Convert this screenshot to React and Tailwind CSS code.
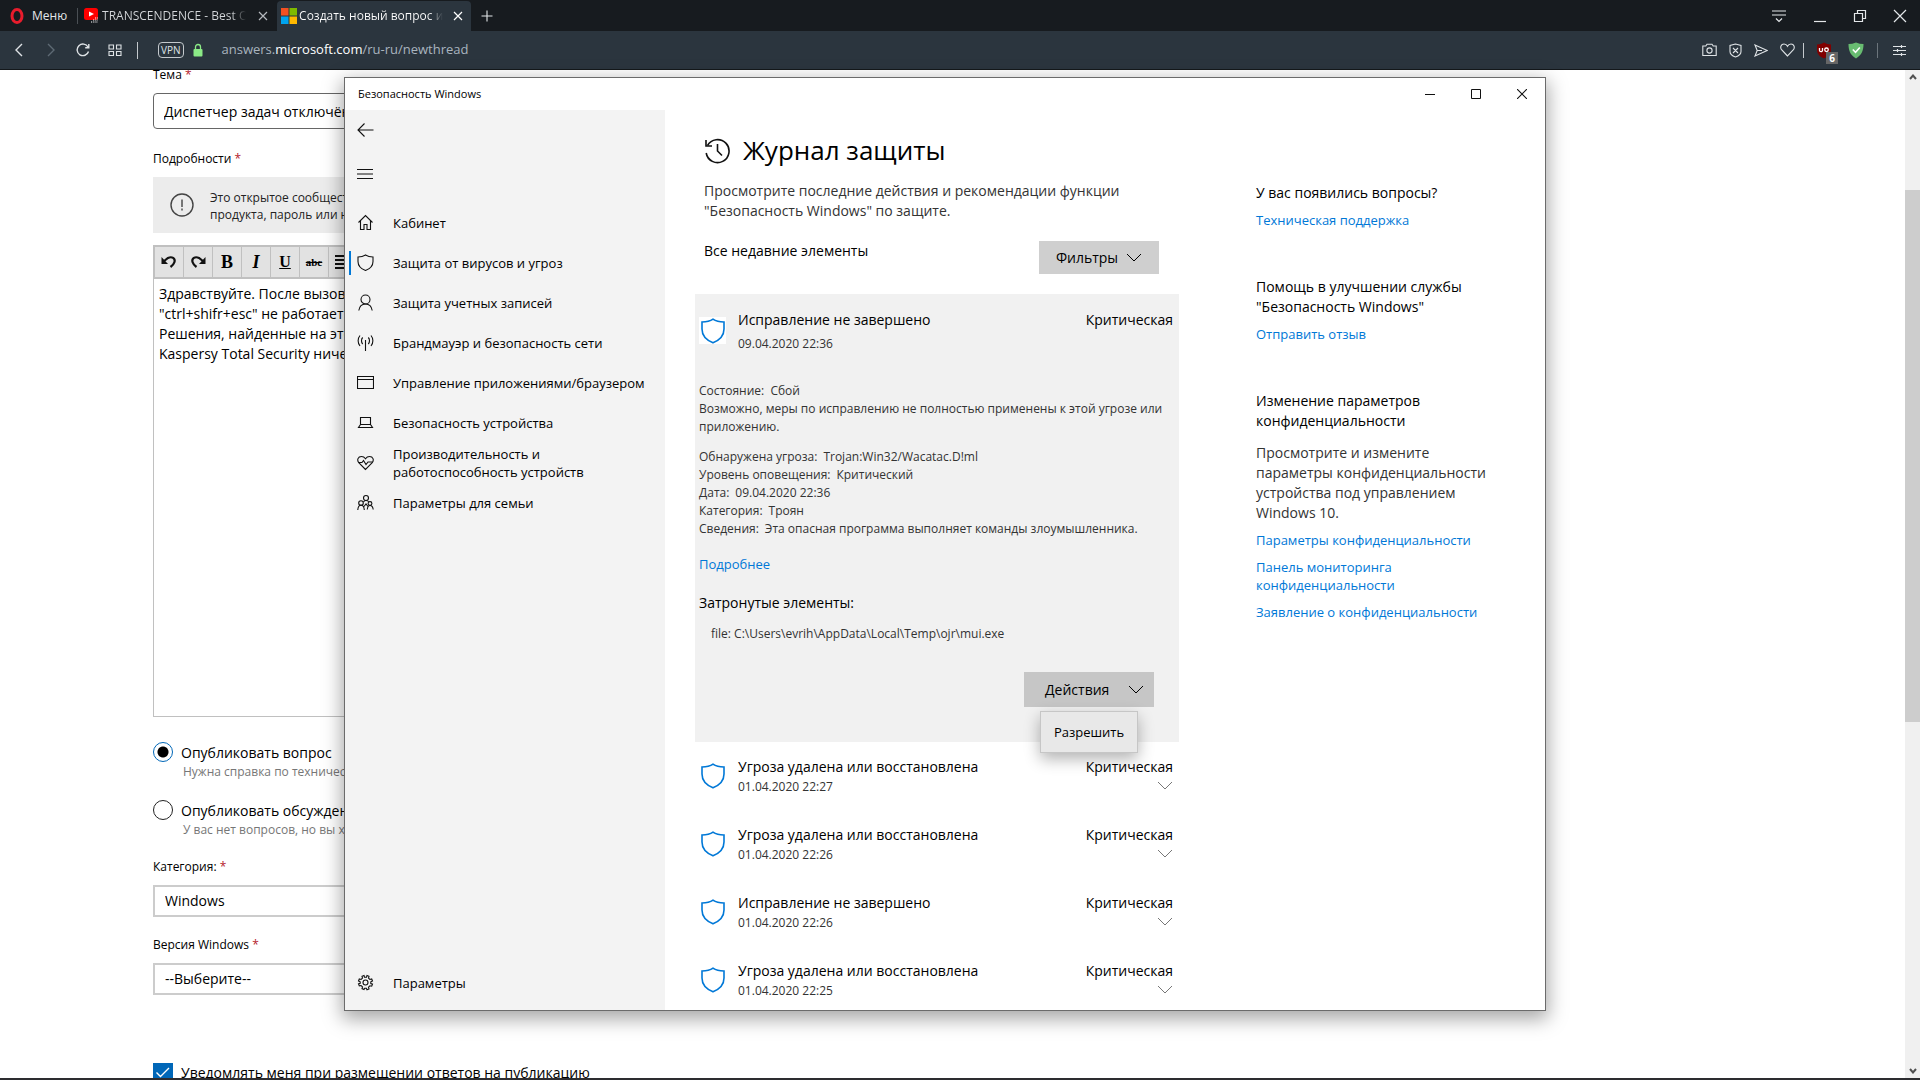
import clsx from 'clsx';

const navItems = [
  { icon: 'home', label: 'Кабинет' },
  { icon: 'shield', label: 'Защита от вирусов и угроз', active: true },
  { icon: 'person', label: 'Защита учетных записей' },
  { icon: 'antenna', label: 'Брандмауэр и безопасность сети' },
  { icon: 'window', label: 'Управление приложениями/браузером' },
  { icon: 'laptop', label: 'Безопасность устройства' },
  { icon: 'heart', label: 'Производительность и работоспособность устройств' },
  { icon: 'family', label: 'Параметры для семьи' },
];

const details = [
  ['Обнаружена угроза:', 'Trojan:Win32/Wacatac.D!ml'],
  ['Уровень оповещения:', 'Критический'],
  ['Дата:', '09.04.2020 22:36'],
  ['Категория:', 'Троян'],
  ['Сведения:', 'Эта опасная программа выполняет команды злоумышленника.'],
];

const history = [
  { title: 'Угроза удалена или восстановлена', date: '01.04.2020 22:27' },
  { title: 'Угроза удалена или восстановлена', date: '01.04.2020 22:26' },
  { title: 'Исправление не завершено', date: '01.04.2020 22:26' },
  { title: 'Угроза удалена или восстановлена', date: '01.04.2020 22:25' },
];

const iconPaths = {
  home: (
    <>
      <path d="M1.5 8.5 8.5 1.5l7 7" />
      <path d="M3.5 7v8.5H7v-5h3v5h3.5V7" />
    </>
  ),
  shield: <path d="M8.500 1C6.500 2.300 4 3 1 3v4.500c0 4 3 7.300 7.500 9 4.500-1.700 7.500-5 7.500-9V3c-3 0-5.500-.7-7.500-2z" />,
  person: (
    <>
      <circle cx="8.500" cy="5.500" r="4.500" />
      <path d="M1.800 16.500c.6-4 3.200-6.500 6.700-6.500s6.100 2.500 6.700 6.500" />
    </>
  ),
  antenna: (
    <>
      <path d="M8.500 6v11" />
      <path d="M5.700 3.500c-1.600 1.700-1.600 4.800 0 6.500M11.300 3.500c1.600 1.700 1.600 4.800 0 6.500" />
      <path d="M3 1.500c-2.500 3-2.500 7.500 0 10.500M14 1.500c2.500 3 2.500 7.500 0 10.500" />
    </>
  ),
  window: <path d="M.5 2.500h16v12H.5zM.5 5.500h16" />,
  laptop: <path d="M3.500 3.500h10v7h-10zM3.500 10.500 1.500 13.500h14l-2-3" />,
  heart: (
    <>
      <path d="M8.500 15.500 2 9C-.5 6 1 2.500 4.500 2.500c1.800 0 3 .8 4 2.200 1-1.400 2.200-2.200 4-2.200C16 2.500 17.500 6 15 9z" />
      <path d="M1.500 8.500H5l1.500-2 2.500 4 2-2.500h4.500" />
    </>
  ),
  family: (
    <>
      <circle cx="9" cy="4" r="2.500" />
      <circle cx="4" cy="9" r="2.300" />
      <circle cx="13" cy="9.500" r="1.900" />
      <path d="M.8 16c.2-3 1.200-4.700 3.200-4.700s3.100 1.700 3.300 4.700M10.300 15.500c.2-2.500 1-4 2.700-4s2.900 1.500 3.200 4M6.500 8C7 7 8 6.500 9 6.500s2.200.4 2.700 1.300M7 12.500l2-2.500 2 2.500" />
    </>
  ),
  gear: (
    <>
      <circle cx="8.500" cy="8.500" r="2.500" />
      <path d="m7 1.500.5 1.700h2L10 1.500l2 .8-.5 1.800 1.400 1.400 1.800-.5.8 2-1.700.8v1.800l1.700.6-.8 2-1.800-.4-1.400 1.400.5 1.700-2 .9-.7-1.500H7.700L7 15.500l-2-.9.5-1.700-1.400-1.400-1.800.4-.8-2 1.700-.6V7.800L1.500 7l.8-2 1.800.5 1.400-1.400L5 2.300z" />
    </>
  ),
};

function NavIcon({ name }) {
  return (
    <svg viewBox="0 0 17 18" className="h-[18px] w-[17px] shrink-0" fill="none" stroke="#111" strokeWidth="1.100">
      {iconPaths[name]}
    </svg>
  );
}

function Chevron({ className }) {
  return (
    <svg viewBox="0 0 16 9" className={clsx('h-[9px] w-4', className)} fill="none" stroke="currentColor" strokeWidth="1">
      <path d="m1 1 7 7 7-7" />
    </svg>
  );
}

function ThreatShield({ boxed }) {
  return (
    <span className={clsx('flex h-[27px] w-[27px] shrink-0 items-center justify-center', boxed && 'bg-white')}>
      <svg viewBox="0 0 24 26" className="h-[26px] w-6" fill="none" stroke="#0078d7" strokeWidth="1.600">
        <path d="M12 1.200C9 3.300 5.500 4 1 4v7c0 6.500 4.200 11 11 13.800C18.800 22 23 17.500 23 11V4c-4.500 0-8-.7-11-2.800z" />
      </svg>
    </span>
  );
}

function TabClose({ bright }) {
  return (
    <button aria-label="Закрыть вкладку" className="ml-2">
      <svg viewBox="0 0 10 10" className="h-2.5 w-2.5" stroke={bright ? '#fff' : '#b5b9bd'} strokeWidth="1.200">
        <path d="m1 1 8 8M9 1 1 9" />
      </svg>
    </button>
  );
}

function Tabs() {
  return (
    <header className="flex h-[31px] shrink-0 items-center bg-[#171b1f] text-[13px] text-[#e4e7ea]">
      <button className="flex h-full items-center gap-2 pl-2.5 pr-2.5">
        <svg viewBox="0 0 14 16" className="h-4 w-3.5">
          <ellipse cx="7" cy="8" rx="5" ry="6.500" fill="none" stroke="#e81c2c" strokeWidth="3" />
        </svg>
        <span className="text-[12px]">Меню</span>
      </button>
      <span className="h-4 w-px bg-[#4a4f54]" />
      <div className="flex h-full w-[199px] items-center gap-1 pl-1.5">
        <svg viewBox="0 0 14 15" className="h-[15px] w-3.5 shrink-0">
          <rect y="0" width="14" height="12" rx="2.500" fill="#f00" />
          <path d="m5 3.500 5 2.500-5 2.500z" fill="#fff" />
          <path d="M7 14h7M9 12h5M11 10h3" stroke="#fff" strokeWidth="1.200" strokeDasharray="1.200 1" />
        </svg>
        <span className="w-[144px] overflow-hidden whitespace-nowrap bg-gradient-to-r from-[#d5d8db] from-90% to-transparent bg-clip-text text-[12px] text-transparent">
          TRANSCENDENCE - Best Of
        </span>
        <TabClose />
      </div>
      <div className="mt-px flex h-[30px] w-[194px] items-center gap-0.5 rounded-t bg-[#2b353e] pl-1">
        <svg viewBox="0 0 16 16" className="h-4 w-4 shrink-0">
          <path fill="#f25022" d="M0 0h7.500v7.500H0z" />
          <path fill="#7fba00" d="M8.500 0H16v7.500H8.500z" />
          <path fill="#00a4ef" d="M0 8.500h7.500V16H0z" />
          <path fill="#ffb900" d="M8.500 8.500H16V16H8.500z" />
        </svg>
        <span className="w-[144px] overflow-hidden whitespace-nowrap bg-gradient-to-r from-white from-90% to-transparent bg-clip-text text-[12px] text-transparent">
          Создать новый вопрос или
        </span>
        <TabClose bright />
      </div>
      <button aria-label="Новая вкладка" className="ml-2.5">
        <svg viewBox="0 0 12 12" className="h-3 w-3" stroke="#e4e7ea" strokeWidth="1.100">
          <path d="M6 .5v11M.5 6h11" />
        </svg>
      </button>
      <div className="ml-auto flex items-center gap-[26px] pr-[13px]">
        <button aria-label="Меню вкладок">
          <svg viewBox="0 0 16 16" className="h-4 w-4" fill="none" stroke="#e4e7ea" strokeWidth="1.200">
            <path d="M1 3h14M1 7h14M5 10.500l3 3 3-3" />
          </svg>
        </button>
        <button aria-label="Свернуть">
          <svg viewBox="0 0 14 14" className="h-3.5 w-3.5" stroke="#e4e7ea" strokeWidth="1.200">
            <path d="M1 12.500h12" />
          </svg>
        </button>
        <button aria-label="Восстановить">
          <svg viewBox="0 0 14 14" className="h-3.5 w-3.5" fill="none" stroke="#e4e7ea" strokeWidth="1.200">
            <path d="M1.500 4.500h8v8h-8zM4.500 4.500v-3h8v8h-3" />
          </svg>
        </button>
        <button aria-label="Закрыть">
          <svg viewBox="0 0 14 14" className="h-3.5 w-3.5" stroke="#e4e7ea" strokeWidth="1.200">
            <path d="m1 1 12 12M13 1 1 13" />
          </svg>
        </button>
      </div>
    </header>
  );
}

function AddressBar() {
  return (
    <nav className="flex h-[39px] shrink-0 items-center border-b border-[#14181b] bg-[#2b353e] pl-[15px] pr-3.5 text-[#dfe3e6]">
      <button aria-label="Назад">
        <svg viewBox="0 0 8 14" className="h-3.5 w-2" fill="none" stroke="currentColor" strokeWidth="1.400">
          <path d="M7 1 1 7l6 6" />
        </svg>
      </button>
      <button aria-label="Вперед" className="ml-6">
        <svg viewBox="0 0 8 14" className="h-3.5 w-2" fill="none" stroke="#5e6a74" strokeWidth="1.400">
          <path d="m1 1 6 6-6 6" />
        </svg>
      </button>
      <button aria-label="Обновить" className="ml-[21px]">
        <svg viewBox="0 0 14 14" className="h-3.5 w-3.5" fill="none" stroke="currentColor" strokeWidth="1.400">
          <path d="M12.500 8.500A5.800 5.800 0 1 1 12 4M12.800 1v3.700H9.200" />
        </svg>
      </button>
      <button aria-label="Экспресс-панель" className="ml-[18px]">
        <svg viewBox="0 0 14 12" className="h-3 w-3.5" fill="none" stroke="currentColor" strokeWidth="1.100">
          <path d="M1 1h4.500v4H1zM8.500 1H13v4H8.500zM1 7.500h4.500v4H1zM8.500 7.500H13v4H8.500z" />
        </svg>
      </button>
      <span className="ml-[15px] h-[17px] w-px bg-[#c4c9cd]" />
      <span className="ml-5 rounded-sm border border-[#c4c9cd] px-0.5 text-[10px] leading-[14px]">VPN</span>
      <svg viewBox="0 0 10 14" className="ml-[9px] h-3.5 w-2.5">
        <path d="M2.500 6V4a2.500 2.500 0 0 1 5 0v2" fill="none" stroke="#8bea86" strokeWidth="1.300" />
        <rect y="6" x=".5" width="9" height="7.500" rx="1" fill="#8bea86" />
      </svg>
      <span className="ml-[19px] text-[13px] text-[#a9b4be]">
        answers.<span className="text-white">microsoft.com</span>/ru-ru/newthread
      </span>
      <div className="ml-auto flex items-center">
        <svg viewBox="0 0 15 14" className="h-3.5 w-[15px]" fill="none" stroke="currentColor" strokeWidth="1.100">
          <path d="M.8 3h3l1.200-1.800h5L11.200 3h3v9.500H.8z" />
          <circle cx="7.500" cy="7.500" r="2.600" />
        </svg>
        <svg viewBox="0 0 13 15" className="ml-3 h-[15px] w-[13px]" fill="none" stroke="currentColor" strokeWidth="1.100">
          <path d="M6.500 1 1 2.500v6c0 2.500 2 4.300 5.500 5.500C10 12.800 12 11 12 8.500v-6zM4 5l5 5M9 5l-5 5" />
        </svg>
        <svg viewBox="0 0 14 13" className="ml-3 h-[13px] w-3.5" fill="none" stroke="currentColor" strokeWidth="1.100">
          <path d="m1 1 12.200 5.500L1 12l2.200-5.500zM3.200 6.500H8" />
        </svg>
        <svg viewBox="0 0 15 14" className="ml-3 h-3.5 w-[15px]" fill="none" stroke="currentColor" strokeWidth="1.100">
          <path d="M7.500 13 1.800 7C-.3 4.500 1 1 4 1c1.600 0 2.800.8 3.500 2.200C8.200 1.800 9.400 1 11 1c3 0 4.300 3.500 2.200 6z" />
        </svg>
        <span className="ml-2 h-[15px] w-px bg-[#c4c9cd]" />
        <span className="relative ml-3">
          <svg viewBox="0 0 16 17" className="h-[17px] w-4">
            <path d="M8 .5C6 1.800 4 2.500 1 2.500V8c0 4.200 3 6.800 7 8.500 4-1.700 7-4.300 7-8.500V2.500C12 2.500 10 1.800 8 .5z" fill="#800000" />
            <path d="M3.500 6v2.200a1.400 1.400 0 0 0 3 0V6" fill="none" stroke="#fff" strokeWidth="1.300" />
            <circle cx="10.500" cy="7.800" r="1.800" fill="none" stroke="#fff" strokeWidth="1.300" />
          </svg>
          <span className="absolute left-2.5 top-2.5 flex h-3 w-3 items-center justify-center bg-[#666] text-[10px] font-bold leading-none text-white">
            6
          </span>
        </span>
        <svg viewBox="0 0 16 17" className="ml-4 h-[17px] w-4">
          <path d="M8 .5C5.500 1.500 3 2 .5 2c0 6 1.500 11 7.500 14.500C14 13 15.500 8 15.500 2 13 2 10.500 1.500 8 .5z" fill="#68bc71" />
          <path d="m4.800 7.500 2.700 2.800 4.300-4.800" fill="none" stroke="#fff" strokeWidth="1.600" />
        </svg>
        <span className="ml-[13px] h-[15px] w-px bg-[#6c757c]" />
        <button aria-label="Настройка" className="ml-[15px]">
          <svg viewBox="0 0 13 13" className="h-[13px] w-[13px]" stroke="currentColor" strokeWidth="1.200">
            <path d="M0 2.500h13M0 6.500h13M0 10.500h13M8.500 1v3M4.500 5v3M8.500 9v3" />
          </svg>
        </button>
      </div>
    </nav>
  );
}

function Required() {
  return <span className="text-[#b5202c]">*</span>;
}

const toolbarButtons = [
  {
    label: 'Отменить',
    face: (
      <svg viewBox="0 0 16 14" className="h-3.5 w-4" fill="none" stroke="#111" strokeWidth="2.200">
        <path d="M2.500 6.500 7 3c4-2 7.500.5 6.500 4-.6 2-2 3.500-4 5" />
        <path d="M.5 2v7h6.500z" fill="#111" stroke="none" />
      </svg>
    ),
  },
  {
    label: 'Повторить',
    face: (
      <svg viewBox="0 0 16 14" className="h-3.5 w-4" fill="none" stroke="#111" strokeWidth="2.200">
        <path d="M13.500 6.500 9 3C5 1 1.500 3.500 2.500 7c.6 2 2 3.500 4 5" />
        <path d="M15.500 2v7H9z" fill="#111" stroke="none" />
      </svg>
    ),
  },
  { label: 'Полужирный', face: <b className="font-['Liberation_Serif',serif] text-lg">B</b> },
  { label: 'Курсив', face: <b className="font-['Liberation_Serif',serif] text-lg italic">I</b> },
  { label: 'Подчеркнутый', face: <span className="font-['Liberation_Serif',serif] text-base font-bold underline">U</span> },
  { label: 'Зачеркнутый', face: <s className="font-['Liberation_Serif',serif] text-[11px] font-bold">abc</s> },
  {
    label: 'По левому краю',
    face: (
      <svg viewBox="0 0 16 14" className="h-3.5 w-4" stroke="#111" strokeWidth="2">
        <path d="M0 1h16M0 5h11M0 9h16M0 13h11" />
      </svg>
    ),
  },
];

function PostType({ id, label, hint, checked, className }) {
  return (
    <div className={clsx('flex items-start gap-2', className)}>
      <input
        id={id}
        type="radio"
        name="post-type"
        defaultChecked={checked}
        className="h-5 w-5 shrink-0 appearance-none rounded-full border border-[#222] checked:border-[#0067b8] checked:bg-[radial-gradient(circle,#000_5px,#fff_6px)]"
      />
      <div className="flex flex-col">
        <label htmlFor={id} className="text-[14px] leading-[21px]">
          {label}
        </label>
        <span className="pl-0.5 text-xs leading-[18px] text-[#767676]">{hint}</span>
      </div>
    </div>
  );
}

function QuestionForm() {
  return (
    <form className="flex w-[880px] max-w-full flex-col pl-[153px] text-[12px] leading-5 text-black">
      <label htmlFor="subject" className="-mt-[5px]">
        Тема <Required />
      </label>
      <input
        id="subject"
        defaultValue="Диспетчер задач отключён администратором"
        className="mt-2 h-9 shrink-0 rounded-sm border border-[#666] px-2.5 text-[14px]"
      />
      <label htmlFor="body" className="mt-5">
        Подробности <Required />
      </label>
      <div className="mt-2 flex h-14 shrink-0 items-center gap-4 bg-[#ececec] pl-[17px] text-[#222]">
        <svg viewBox="0 0 24 24" className="h-6 w-6 shrink-0" fill="none" stroke="#444" strokeWidth="1.400">
          <circle cx="12" cy="12" r="11" />
          <path d="M12 6.500v7.500M12 15.500v2" />
        </svg>
        <p className="pt-0.5 leading-[17px]">
          Это открытое сообщество. Чтобы защитить личные данные, не публикуйте ключ
          <br />
          продукта, пароль или номер кредитной карты.
        </p>
      </div>
      <div className="mt-3 flex h-[34px] shrink-0 items-stretch border-2 border-[#c0c0c0] bg-[#e2e2e2]">
        {toolbarButtons.map((button) => (
          <button
            key={button.label}
            type="button"
            aria-label={button.label}
            className="flex w-[29px] items-center justify-center border-r border-[#c0c0c0]"
          >
            {button.face}
          </button>
        ))}
      </div>
      <textarea
        id="body"
        className="h-[438px] shrink-0 resize-none border border-t-0 border-[#c0c0c0] px-[5px] pt-[5px] text-[14px] leading-5"
        defaultValue={
          'Здравствуйте. После вызова диспетчера задач\n"ctrl+shifr+esc" не работает сочетание клавиш.\nРешения, найденные на этом форуме, не помогли.\nKaspersy Total Security ничего не находит.'
        }
      />
      <PostType id="question" label="Опубликовать вопрос" hint="Нужна справка по техническим вопросам" checked className="mt-[25px]" />
      <PostType id="discussion" label="Опубликовать обсуждение" hint="У вас нет вопросов, но вы хотите поделиться" className="mt-[19px]" />
      <label htmlFor="category" className="mt-[18px]">
        Категория: <Required />
      </label>
      <select id="category" className="mt-2 h-8 shrink-0 appearance-none border-2 border-[#ccc] px-2.5 text-[14px]">
        <option>Windows</option>
      </select>
      <label htmlFor="version" className="mt-[18px]">
        Версия Windows <Required />
      </label>
      <select id="version" className="mt-2 h-8 shrink-0 appearance-none border-2 border-[#ccc] px-2.5 text-[14px]">
        <option>--Выберите--</option>
      </select>
      <div className="mt-[68px] flex items-center gap-2">
        <span className="relative flex h-5 w-5">
          <input id="notify" type="checkbox" defaultChecked className="h-5 w-5 appearance-none bg-[#0067b8]" />
          <svg viewBox="0 0 20 20" className="pointer-events-none absolute inset-0" fill="none" stroke="#fff" strokeWidth="1.400">
            <path d="m3.500 9.500 4 4L16 5" />
          </svg>
        </span>
        <label htmlFor="notify" className="text-[14px]">
          Уведомлять меня при размещении ответов на публикацию
        </label>
      </div>
    </form>
  );
}

function Sidebar() {
  return (
    <aside className="flex w-80 shrink-0 flex-col bg-[#f3f3f3] text-[13px] leading-[18px] text-black">
      <button aria-label="Назад" className="flex h-10 w-10 items-center pl-3">
        <svg viewBox="0 0 17 14" className="h-3.5 w-[17px]" fill="none" stroke="#111" strokeWidth="1.100">
          <path d="M16.500 7H1M7.500.5 1 7l6.500 6.500" />
        </svg>
      </button>
      <button aria-label="Меню навигации" className="mt-1 flex h-10 w-10 items-center pl-3">
        <svg viewBox="0 0 16 10" className="h-2.5 w-4" stroke="#111" strokeWidth="1">
          <path d="M0 .5h16M0 5h16M0 9.500h16" />
        </svg>
      </button>
      <ul className="mt-[9px]">
        {navItems.map((item) => (
          <li key={item.label}>
            <a href="#" className="flex h-10 items-center gap-[19px]">
              <span className="flex w-[29px] items-center gap-[6px] pl-1">
                <span className={clsx('h-6 w-0.5 shrink-0', item.active && 'bg-[#0078d7]')} />
                <NavIcon name={item.icon} />
              </span>
              <span className="max-w-[264px]">{item.label}</span>
            </a>
          </li>
        ))}
      </ul>
      <a href="#" className="mb-[7px] mt-auto flex h-10 items-center gap-[19px] pl-3">
        <NavIcon name="gear" />
        Параметры
      </a>
    </aside>
  );
}

function CurrentThreat() {
  return (
    <section className="bg-[#f1f1f1] px-1 pb-[35px] pt-4 text-[12px] leading-[18px] text-[#333]">
      <div className="flex">
        <div className="mt-[7px]">
          <ThreatShield boxed />
        </div>
        <div className="ml-3 flex-1">
          <h2 className="text-[14px] leading-5 text-black">Исправление не завершено</h2>
          <p className="mt-1 leading-5">09.04.2020 22:36</p>
        </div>
        <span className="pr-0.5 text-[14px] leading-5 text-black">Критическая</span>
      </div>
      <p className="mt-7">Состояние:&nbsp; Сбой</p>
      <p>Возможно, меры по исправлению не полностью применены к этой угрозе или приложению.</p>
      <dl className="mt-3">
        {details.map(([term, value]) => (
          <div key={term} className="flex gap-1.5">
            <dt>{term}</dt>
            <dd>{value}</dd>
          </div>
        ))}
      </dl>
      <a href="#" className="mt-[17px] block text-[13px] text-[#0078d7]">
        Подробнее
      </a>
      <h3 className="mt-5 text-[14px] leading-5 text-black">Затронутые элементы:</h3>
      <p className="mt-3 pl-3">file: C:\Users\evrih\AppData\Local\Temp\ojr\mui.exe</p>
      <div className="relative mr-[21px] mt-[29px] flex justify-end">
        <button className="flex h-[35px] w-[130px] items-center justify-between bg-[#c6c6c6] pl-[21px] pr-2.5 text-[14px] text-black">
          Действия
          <Chevron />
        </button>
        <div className="absolute right-4 top-[39px] border border-[#c6c6c6] bg-[#e8e8e8] shadow-[0_6px_16px_rgba(0,0,0,0.3)]">
          <button className="h-10 w-24 text-[13px] text-black">Разрешить</button>
        </div>
      </div>
    </section>
  );
}

function SecurityWindow() {
  return (
    <div className="absolute bottom-[67px] left-[344px] right-[374px] top-[77px] flex flex-col border border-[#6b6b6b] bg-white shadow-[0_6px_18px_2px_rgba(0,0,0,0.35)]">
      <div className="flex h-8 shrink-0 items-center pl-[13px] pr-[18px] text-[11px] text-black">
        Безопасность Windows
        <div className="ml-auto flex items-center gap-9">
          <button aria-label="Свернуть окно">
            <svg viewBox="0 0 10 10" className="h-2.5 w-2.5" stroke="#111">
              <path d="M0 5.500h10" />
            </svg>
          </button>
          <button aria-label="Развернуть окно">
            <svg viewBox="0 0 10 10" className="h-2.5 w-2.5" fill="none" stroke="#111">
              <path d="M.5.5h9v9h-9z" />
            </svg>
          </button>
          <button aria-label="Закрыть окно">
            <svg viewBox="0 0 10 10" className="h-2.5 w-2.5" stroke="#111" strokeWidth="1.100">
              <path d="m0 0 10 10M10 0 0 10" />
            </svg>
          </button>
        </div>
      </div>
      <div className="flex min-h-0 flex-1">
        <Sidebar />
        <main className="ml-[30px] w-[484px] shrink-0 overflow-hidden">
          <div className="pl-[9px]">
            <h1 className="mt-5 flex items-center gap-3 text-[26px] leading-10 text-black">
              <svg viewBox="0 0 27 27" className="h-[27px] w-[27px]" fill="none" stroke="#111" strokeWidth="1.600">
                <path d="M3.500 8.500A11.500 11.500 0 1 1 2.200 16" />
                <path d="M2 3v6h6M13.500 7v7l4.500 4.500" />
              </svg>
              Журнал защиты
            </h1>
            <p className="mt-[11px] text-[14px] leading-5 text-[#333]">
              Просмотрите последние действия и рекомендации функции
              <br />
              "Безопасность Windows" по защите.
            </p>
            <div className="mt-5 flex items-start justify-between pr-5">
              <span className="text-[14px] leading-5 text-black">Все недавние элементы</span>
              <button className="flex h-[33px] w-[120px] items-center justify-center gap-2 bg-[#cfcfcf] text-[14px] text-black">
                Фильтры
                <Chevron />
              </button>
            </div>
          </div>
          <div className="mt-5">
            <CurrentThreat />
          </div>
          <ul className="mt-[15px]">
            {history.map((entry, index) => (
              <li key={index} className="flex h-[68px] pl-1 pr-1.5">
                <div className="mt-[5px]">
                  <ThreatShield />
                </div>
                <div className="ml-3 flex-1">
                  <h2 className="text-[14px] leading-5 text-black">{entry.title}</h2>
                  <p className="text-[12px] leading-5 text-[#333]">{entry.date}</p>
                </div>
                <div className="flex flex-col items-end text-[14px] leading-5 text-black">
                  Критическая
                  <button aria-label="Подробности" className="mt-1">
                    <Chevron className="text-[#777]" />
                  </button>
                </div>
              </li>
            ))}
          </ul>
        </main>
        <aside className="ml-[77px] w-60 pt-[73px] text-[14px] leading-5 text-black">
          <h2>У вас появились вопросы?</h2>
          <a href="#" className="mt-2 block text-[13px] leading-[18px] text-[#0078d7]">
            Техническая поддержка
          </a>
          <h2 className="mt-12">
            Помощь в улучшении службы
            <br />
            "Безопасность Windows"
          </h2>
          <a href="#" className="mt-2 block text-[13px] leading-[18px] text-[#0078d7]">
            Отправить отзыв
          </a>
          <h2 className="mt-12">
            Изменение параметров
            <br />
            конфиденциальности
          </h2>
          <p className="mt-3 text-[#333]">
            Просмотрите и измените
            <br />
            параметры конфиденциальности
            <br />
            устройства под управлением
            <br />
            Windows 10.
          </p>
          <div className="mt-2 flex flex-col gap-[9px] text-[13px] leading-[18px] text-[#0078d7]">
            <a href="#">Параметры конфиденциальности</a>
            <a href="#">
              Панель мониторинга
              <br />
              конфиденциальности
            </a>
            <a href="#">Заявление о конфиденциальности</a>
          </div>
        </aside>
      </div>
    </div>
  );
}

export default function App() {
  return (
    <div className="relative flex h-screen flex-col overflow-hidden border-b-2 border-[#2d2d30] bg-white font-['Open_Sans','Noto_Sans',sans-serif]">
      <Tabs />
      <AddressBar />
      <div className="flex min-h-0 flex-1 justify-between overflow-hidden">
        <QuestionForm />
        <div className="flex w-[15px] flex-col items-center justify-between bg-[#f0f0f0] py-1 text-[#505050]">
          <svg viewBox="0 0 8 6" className="h-1.5 w-2" fill="none" stroke="currentColor" strokeWidth="2">
            <path d="m1 5 3-3.500L7 5" />
          </svg>
          <div className="mb-auto mt-[110px] h-[532px] w-full bg-[#cdcdcd]" />
          <svg viewBox="0 0 8 6" className="h-1.5 w-2" fill="none" stroke="currentColor" strokeWidth="2">
            <path d="m1 1 3 3.500L7 1" />
          </svg>
        </div>
      </div>
      <SecurityWindow />
    </div>
  );
}
